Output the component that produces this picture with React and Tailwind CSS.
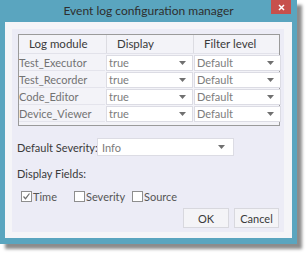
import React from 'react';

const rows = ['Test_Executor', 'Test_Recorder', 'Code_Editor', 'Device_Viewer'];

const Arrow = () => (
  <svg width="7" height="4" viewBox="0 0 7 4" className="shrink-0">
    <path d="M0 0h7L3.5 4z" fill="#707070" />
  </svg>
);

const Combo = ({ value, className }) => (
  <div className={`flex items-center justify-between bg-white border border-[#dcdce4] pl-[2px] pr-[6px] ${className}`}>
    <span className="text-[#7c7c7c]">{value}</span>
    <Arrow />
  </div>
);

const Check = ({ checked, label }) => (
  <label className="flex items-center gap-[1px]">
    <span className="w-[11px] h-[11px] border border-[#8e8e8e] bg-white flex items-center justify-center">
      {checked && (
        <svg width="9" height="9" viewBox="0 0 9 9">
          <path d="M1.5 4.5l2 2.2L7.5 1.5" stroke="#707070" strokeWidth="1.2" fill="none" />
        </svg>
      )}
    </span>
    <span className="text-[#555]">{label}</span>
  </label>
);

export default function App() {
  return (
    <div className="w-[308px] h-[255px] bg-white text-[11px] leading-none whitespace-nowrap" style={{ fontFamily: 'Lato, "Liberation Sans", sans-serif' }}>
      <div className="w-[297px] h-[244px] bg-[#5aa5bf] flex flex-col shadow-[5px_5px_3px_rgba(0,0,0,0.45)]">
        {/* Title bar */}
        <div className="relative h-[22px] flex items-center justify-center text-[12px] text-[#2e2e2e]">
          Event log configuration manager
          <div className="absolute right-[6px] top-0 w-[20px] h-[14px] bg-[#c7504c] flex items-center justify-center">
            <svg width="7" height="7" viewBox="0 0 7 7">
              <path d="M1 1l5 5M6 1L1 6" stroke="#fff" strokeWidth="1.5" />
            </svg>
          </div>
        </div>

        {/* Client area */}
        <div className="flex-1 ml-[5px] mr-[5px] mb-[6px] bg-[#f5f5f8] pl-[7px] pt-[7px] pr-[8px] pb-[6px] flex">
          <div className="flex-1 bg-[#ececf6] pl-[6px] pt-[5px] flex flex-col">
            {/* Table */}
            <div className="w-[262px] h-[92px] border border-[#9a9a9a] bg-[#f3f3f8]">
              <div className="grid grid-cols-[88px_87px_86px] h-[19px] border-b border-[#e2e2ea] text-[11.5px] text-[#3a3a3a]">
                <div className="flex items-center pl-[10px] border-r border-[#dcdce2]">Log module</div>
                <div className="flex items-center pl-[10px] border-r border-[#dcdce2]">Display</div>
                <div className="flex items-center pl-[10px]">Filter level</div>
              </div>
              {rows.map((r) => (
                <div key={r} className="grid grid-cols-[86px_87px_87px] h-[17px] items-center gap-[1px]">
                  <div className="h-[16px] flex items-center text-[#727272] border-b border-[#e4e4ec]">{r}</div>
                  <Combo value="true" className="h-[16px]" />
                  <Combo value="Default" className="h-[16px]" />
                </div>
              ))}
            </div>

            <div className="flex items-center mt-[12px]">
              <span className="w-[80px] -ml-[1px] text-[#3a3a3a]">Default Severity:</span>
              <Combo value="Info" className="w-[137px] h-[18px] pl-[4px] pr-[8px]" />
            </div>

            <div className="mt-[12px] -ml-[1px] text-[#3a3a3a]">Display Fields:</div>

            <div className="flex items-center mt-[12px] ml-[3px]">
              <div className="w-[53px]"><Check checked label="Time" /></div>
              <div className="w-[58px]"><Check label="Severity" /></div>
              <Check label="Source" />
            </div>

            <div className="flex justify-end gap-[5px] mt-[6px] pr-[5px]">
              <button className="w-[46px] h-[20px] bg-[#f4f4f7] border border-[#d8d8de] text-[#3a3a3a]">OK</button>
              <button className="w-[45px] h-[20px] bg-[#f4f4f7] border border-[#d8d8de] text-[#3a3a3a]">Cancel</button>
            </div>
          </div>
        </div>
      </div>
    </div>
  );
}
